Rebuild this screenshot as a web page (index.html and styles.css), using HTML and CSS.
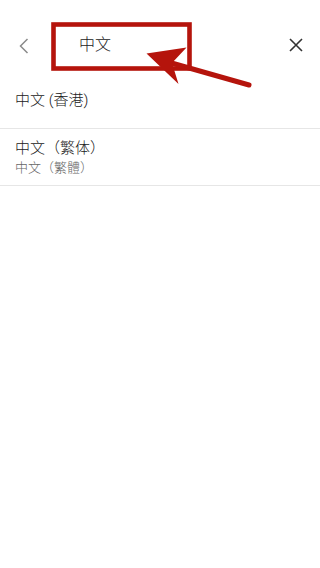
FILE: index.html
```html
<!DOCTYPE html>
<html lang="zh">
<head>
<meta charset="utf-8">
<meta name="viewport" content="width=device-width, initial-scale=1">
<link rel="stylesheet" href="styles.css">
</head>
<body>
<div class="page">
  <header class="topbar">
    <button class="icon-btn back" aria-label="返回">
      <svg width="12" height="16" viewBox="0 0 12 16"><path d="M9.5 1 L2.5 8 L9.5 15" fill="none" stroke="#8a8a8a" stroke-width="1.5"/></svg>
    </button>
    <div class="search">中文</div>
    <button class="icon-btn close" aria-label="清除">
      <svg width="14" height="14" viewBox="0 0 14 14"><path d="M1 1 L13 13 M13 1 L1 13" fill="none" stroke="#333" stroke-width="1.6"/></svg>
    </button>
  </header>
  <ul class="list">
    <li class="item"><span class="title">中文 (香港)</span></li>
    <li class="item"><span class="title">中文（繁体）</span><span class="sub">中文（繁體）</span></li>
  </ul>
  <svg class="annotation" width="320" height="100" viewBox="0 0 320 100">
    <rect x="53.5" y="24.5" width="136" height="44" fill="none" stroke="#b5140c" stroke-width="4.6"/>
    <line x1="249" y1="85" x2="168" y2="62" stroke="#b5140c" stroke-width="5" stroke-linecap="round"/>
    <polygon points="146.5,53.5 186.5,47.5 172,63 178.5,84" fill="#b5140c"/>
  </svg>
</div>
</body>
</html>
```
FILE: styles.css
```css
html, body {
  margin: 0;
  padding: 0;
  background: #fff;
}
body {
  font-family: Roboto, "Noto Sans CJK SC", "Noto Sans CJK TC", sans-serif;
  color: #212121;
}
.page {
  position: relative;
  width: 320px;
  height: 568px;
  overflow: hidden;
}
.topbar {
  height: 72px;
  display: flex;
  align-items: center;
  padding-top: 20px;
  box-sizing: border-box;
  padding-left: 18px;
  padding-right: 17px;
}
.icon-btn {
  background: none;
  border: 0;
  padding: 0;
  display: flex;
  align-items: center;
  justify-content: center;
}
.back {
  width: 12px;
  height: 16px;
}
.search {
  flex: 1;
  margin-left: 49px;
  font-size: 16px;
  line-height: 20px;
  font-weight: 300;
  color: #222;
  margin-top: -2px;
}
.close {
  width: 14px;
  height: 14px;
  margin-top: -2px;
}
.list {
  list-style: none;
  margin: 0;
  padding: 0;
}
.item {
  display: flex;
  flex-direction: column;
  justify-content: center;
  height: 56px;
  padding: 0 15px;
  border-bottom: 1px solid #e6e6e6;
}
.title {
  font-size: 15px;
  line-height: 18px;
  font-weight: 300;
  color: #212121;
}
.sub {
  font-size: 13px;
  line-height: 17px;
  font-weight: 300;
  color: #666;
  margin-top: 2px;
}
.item .title:only-child {
  margin-top: 0;
}
.annotation {
  position: absolute;
  left: 0;
  top: 0;
}
```
